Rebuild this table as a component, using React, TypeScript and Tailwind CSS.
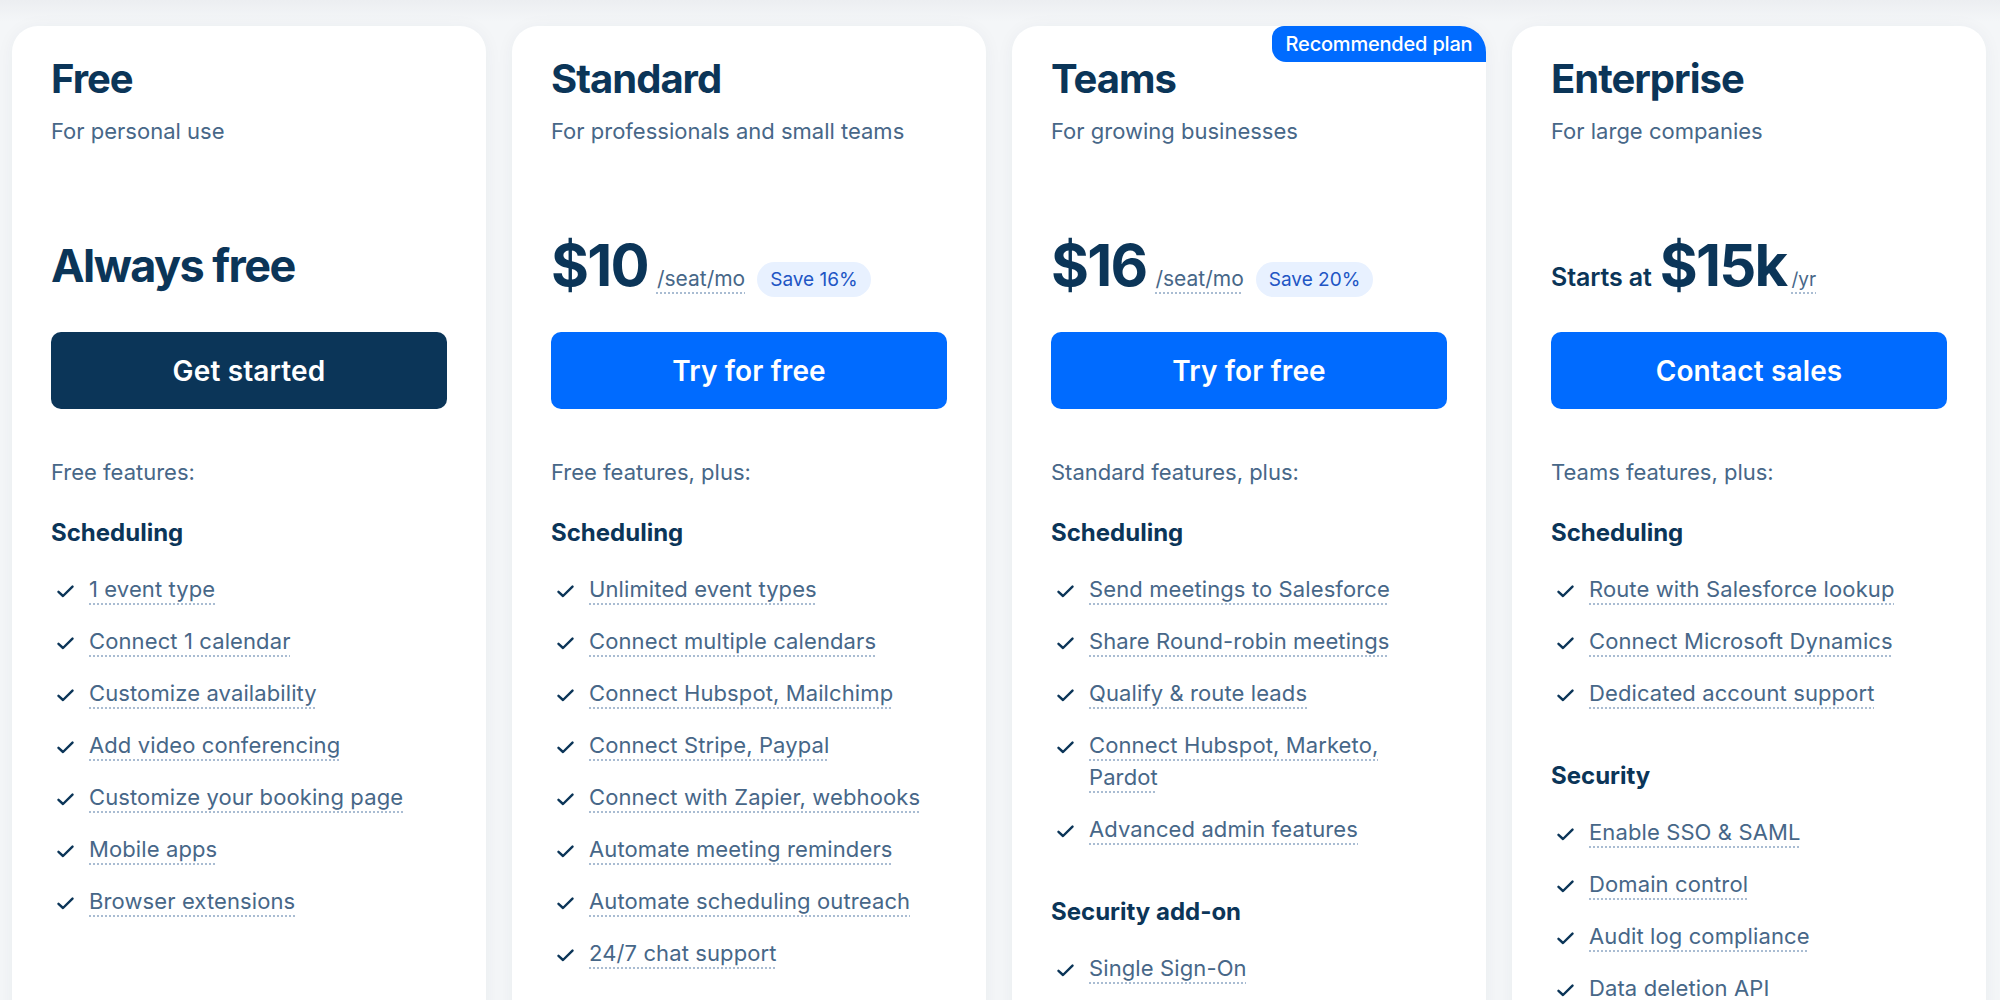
import React from "react";

type Group = { h: string; items: string[] };
type Plan = {
  title: string;
  sub: string;
  kind: "free" | "seat" | "ent";
  price?: string;
  save?: string;
  btn: string;
  dark?: boolean;
  badge?: boolean;
  intro: string;
  groups: Group[];
};

const plans: Plan[] = [
  {
    title: "Free",
    sub: "For personal use",
    kind: "free",
    btn: "Get started",
    dark: true,
    intro: "Free features:",
    groups: [
      {
        h: "Scheduling",
        items: [
          "1 event type",
          "Connect 1 calendar",
          "Customize availability",
          "Add video conferencing",
          "Customize your booking page",
          "Mobile apps",
          "Browser extensions",
        ],
      },
    ],
  },
  {
    title: "Standard",
    sub: "For professionals and small teams",
    kind: "seat",
    price: "$10",
    save: "Save 16%",
    btn: "Try for free",
    intro: "Free features, plus:",
    groups: [
      {
        h: "Scheduling",
        items: [
          "Unlimited event types",
          "Connect multiple calendars",
          "Connect Hubspot, Mailchimp",
          "Connect Stripe, Paypal",
          "Connect with Zapier, webhooks",
          "Automate meeting reminders",
          "Automate scheduling outreach",
          "24/7 chat support",
        ],
      },
    ],
  },
  {
    title: "Teams",
    sub: "For growing businesses",
    kind: "seat",
    price: "$16",
    save: "Save 20%",
    btn: "Try for free",
    badge: true,
    intro: "Standard features, plus:",
    groups: [
      {
        h: "Scheduling",
        items: [
          "Send meetings to Salesforce",
          "Share Round-robin meetings",
          "Qualify & route leads",
          "Connect Hubspot, Marketo,\nPardot",
          "Advanced admin features",
        ],
      },
      { h: "Security add-on", items: ["Single Sign-On"] },
    ],
  },
  {
    title: "Enterprise",
    sub: "For large companies",
    kind: "ent",
    price: "$15k",
    btn: "Contact sales",
    intro: "Teams features, plus:",
    groups: [
      {
        h: "Scheduling",
        items: [
          "Route with Salesforce lookup",
          "Connect Microsoft Dynamics",
          "Dedicated account support",
        ],
      },
      {
        h: "Security",
        items: ["Enable SSO & SAML", "Domain control", "Audit log compliance", "Data deletion API"],
      },
    ],
  },
];

const dotted =
  "underline decoration-dotted decoration-2 decoration-[#a9bcd2] underline-offset-[6px] [text-decoration-skip-ink:none]";

function Check() {
  return (
    <svg width="17" height="13" viewBox="0 0 17 13" fill="none">
      <path
        d="M1.5 6.8 L6 11 L15.5 1.6"
        stroke="#0b3558"
        strokeWidth="2.4"
        strokeLinecap="round"
        strokeLinejoin="round"
      />
    </svg>
  );
}

function Price({ p }: { p: Plan }) {
  if (p.kind === "free") {
    return (
      <div className="mt-[89px] h-[60px] flex items-end pb-[6px]">
        <div className="text-[45px] leading-[46px] font-bold tracking-[-0.035em] text-[#0b3558]">
          Always free
        </div>
      </div>
    );
  }
  if (p.kind === "seat") {
    return (
      <div className="mt-[89px] h-[60px] flex items-baseline">
        <span className="text-[58px] leading-[60px] font-bold tracking-[-0.03em] text-[#0b3558]">
          {p.price}
        </span>
        <span className={`ml-[9px] text-[21px] text-[#476788] ${dotted}`}>/seat/mo</span>
        <span className="ml-[12px] rounded-full bg-[#e8f1ff] px-[13px] py-[5px] text-[19px] leading-[25px] text-[#2155c4]">
          {p.save}
        </span>
      </div>
    );
  }
  return (
    <div className="mt-[89px] h-[60px] flex items-baseline">
      <span className="text-[25px] font-semibold text-[#0b3558] tracking-[-0.005em]">Starts at</span>
      <span className="ml-[8px] text-[58px] leading-[60px] font-bold tracking-[-0.03em] text-[#0b3558]">
        {p.price}
      </span>
      <span className={`ml-[5px] text-[19px] text-[#476788] ${dotted}`}>/yr</span>
    </div>
  );
}

function Card({ p }: { p: Plan }) {
  return (
    <div className="relative w-[474px] h-[1100px] shrink-0 overflow-hidden rounded-[26px] bg-white shadow-[0_2px_18px_rgba(11,53,88,0.05)] px-[39px] pt-[29px]">
      {p.badge && (
        <div className="absolute right-0 top-0 flex h-[36px] w-[214px] items-center justify-center rounded-bl-[14px] rounded-tl-[12px] bg-[#006bff] text-[20px] font-medium text-white tracking-[-0.01em]">
          Recommended plan
        </div>
      )}
      <div className="text-[40px] leading-[48px] font-bold tracking-[-0.025em] text-[#0b3558]">{p.title}</div>
      <div className="mt-[13px] text-[22px] leading-[30px] text-[#476788]">{p.sub}</div>
      <Price p={p} />
      <div
        className={`mt-[37px] flex h-[77px] items-center justify-center rounded-[10px] text-[28px] font-semibold tracking-[0.005em] text-white ${
          p.dark ? "bg-[#0b3558]" : "bg-[#006bff]"
        }`}
      >
        {p.btn}
      </div>
      <div className="mt-[47px] text-[22px] leading-[32px] text-[#476788]">{p.intro}</div>
      {p.groups.map((g, gi) => (
        <div key={g.h} className={gi === 0 ? "mt-[29px]" : "mt-[51px]"}>
          <div className="text-[24px] leading-[32px] font-bold text-[#0b3558]">{g.h}</div>
          <ul className="mt-[24px] flex flex-col gap-[20px]">
            {g.items.map((it) => (
              <li key={it} className="flex">
                <div className="w-[38px] shrink-0 pl-[6px] pt-[12px]">
                  <Check />
                </div>
                <div className="text-[22px] leading-[32px] tracking-[0.005em] text-[#476788] whitespace-pre-line">
                  <span className={dotted}>{it}</span>
                </div>
              </li>
            ))}
          </ul>
        </div>
      ))}
    </div>
  );
}

export default function App() {
  return (
    <div className="h-[1000px] w-[2000px] overflow-hidden bg-[linear-gradient(#eceef1,#f4f6f8_22px)] font-['Inter',sans-serif]">
      <div className="flex gap-[26px] pl-[12px] pt-[26px]">
        {plans.map((p) => (
          <Card key={p.title} p={p} />
        ))}
      </div>
    </div>
  );
}
